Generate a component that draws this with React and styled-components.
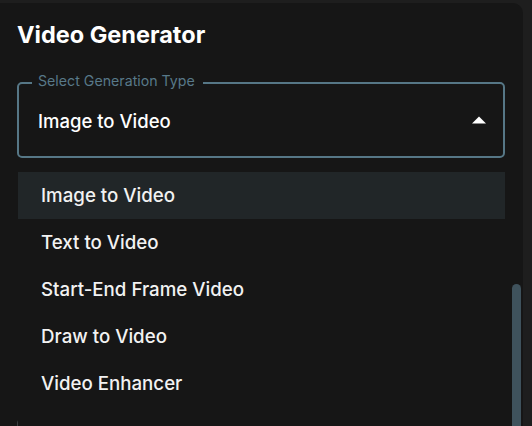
import React from "react";
import styled, { createGlobalStyle } from "styled-components";

const Global = createGlobalStyle`
  html, body {
    margin: 0;
    padding: 0;
    background: #1e1e1e;
    font-family: Inter, "Noto Sans", "Liberation Sans", sans-serif;
    -webkit-font-smoothing: antialiased;
  }
  * { box-sizing: border-box; }
`;

const Panel = styled.section`
  position: relative;
  margin-top: 3px;
  width: 523px;
  height: 423px;
  background: #161616;
  border-top-right-radius: 10px;
  overflow: hidden;
  padding: 17px 18px 0 17px;
`;

const Title = styled.h1`
  margin: 0;
  font-size: 23.5px;
  line-height: 30px;
  font-weight: 700;
  color: #ffffff;
`;

const Field = styled.div`
  position: relative;
  margin-top: 32px;
`;

const Outline = styled.div`
  position: relative;
  height: 76px;
  border: 2px solid #567786;
  border-radius: 5px;
  display: flex;
  align-items: center;
  justify-content: space-between;
  padding: 0 17px 0 19px;
`;

const Label = styled.span`
  position: absolute;
  left: 13px;
  top: -11px;
  padding: 0 8px 0 6px;
  background: #161616;
  font-size: 14.2px;
  line-height: 16px;
  color: #587989;
`;

const Value = styled.span`
  font-size: 18.5px;
  font-weight: 500;
  color: #ffffff;
  padding-top: 2px;
`;

const Caret = styled.svg`
  display: block;
  width: 14px;
  height: 8px;
`;

const NextField = styled.div`
  margin-top: 260px;
  height: 56px;
  border: 1px solid #3a3d3f;
  border-radius: 5px;
`;

const Menu = styled.ul`
  position: absolute;
  top: 90px;
  left: 1px;
  right: 0;
  min-height: 300px;
  margin: 0;
  padding: 0;
  list-style: none;
  background: #161616;
`;

const Item = styled.li`
  height: 47px;
  display: flex;
  align-items: center;
  padding-left: 23px;
  font-size: 18.7px;
  font-weight: 500;
  color: #f2f2f2;
  background: ${(p) => (p.$active ? "#212628" : "transparent")};
`;

const Thumb = styled.div`
  position: absolute;
  right: 2px;
  top: 281px;
  bottom: 0;
  width: 9px;
  border-radius: 5px 5px 0 0;
  background: #3f525c;
`;

const options = [
  "Image to Video",
  "Text to Video",
  "Start-End Frame Video",
  "Draw to Video",
  "Video Enhancer",
];

export default function App() {
  const selected = "Image to Video";
  return (
    <>
      <Global />
      <Panel>
        <Title>Video Generator</Title>
        <Field>
          <Outline>
            <Label>Select Generation Type</Label>
            <Value>{selected}</Value>
            <Caret viewBox="0 0 14 8">
              <path d="M0 7.5 L7 0.5 L14 7.5 Z" fill="#ffffff" />
            </Caret>
          </Outline>
          <NextField />
          <Menu>
            {options.map((o) => (
              <Item key={o} $active={o === selected}>
                {o}
              </Item>
            ))}
          </Menu>
        </Field>
        <Thumb />
      </Panel>
    </>
  );
}
